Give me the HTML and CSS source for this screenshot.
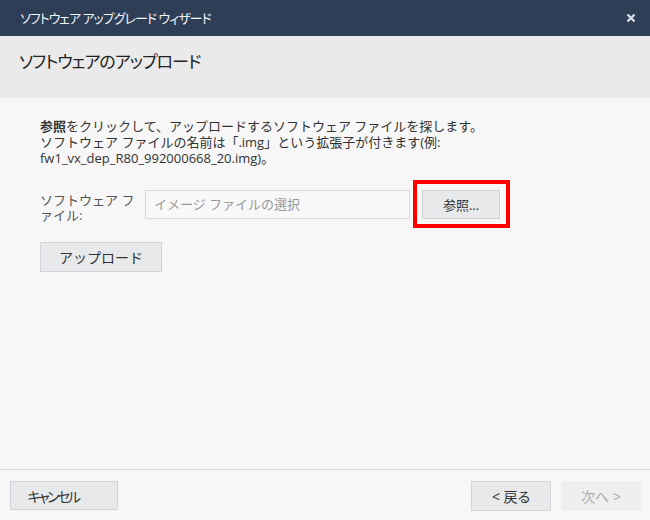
FILE: index.html
```html
<!DOCTYPE html>
<html lang="ja">
<head>
<meta charset="utf-8">
<link rel="stylesheet" href="styles.css">
</head>
<body>
<div class="dialog">
  <div class="titlebar">
    <span class="title">ソフトウェア アップグレード ウィザード</span>
    <span class="close" aria-label="close">
      <svg width="10" height="10" viewBox="0 0 10 10"><path d="M1.5 1.5 L8.5 8.5 M8.5 1.5 L1.5 8.5" stroke="#d7dde6" stroke-width="2.4" stroke-linecap="butt"/></svg>
    </span>
  </div>
  <div class="header">
    <h1 class="heading">ソフトウェアのアップロード</h1>
  </div>
  <div class="body">
    <p class="desc"><b>参照</b>をクリックして、アップロードするソフトウェア ファイルを探します。<br>ソフトウェア ファイルの名前は「<span class="lat">.img</span>」という拡張子が付きます<span class="lat">(</span>例<span class="lat">:</span><br><span class="lat">fw1_vx_dep_R80_992000668_20.img)</span>。</p>
    <div class="filerow">
      <label class="label">ソフトウェア ファイル:</label>
      <input class="file" type="text" placeholder="イメージ ファイルの選択">
      <div class="highlight"><button class="btn browse">参照...</button></div>
    </div>
    <button class="btn upload">アップロード</button>
  </div>
  <div class="footer">
    <button class="btn cancel">キャンセル</button>
    <div class="nav">
      <button class="btn back">&lt; 戻る</button>
      <button class="btn next" disabled>次へ &gt;</button>
    </div>
  </div>
</div>
</body>
</html>
```

FILE: styles.css
```css
html, body {
  margin: 0;
  padding: 0;
}
body {
  width: 650px;
  height: 520px;
  font-family: "Open Sans", "Noto Sans CJK JP", sans-serif;
  background: #f7f7f7;
  overflow: hidden;
}
.dialog {
  display: flex;
  flex-direction: column;
  height: 520px;
}
.titlebar {
  height: 36px;
  background: #2e3e57;
  display: flex;
  align-items: center;
  justify-content: space-between;
  padding: 0 14px 0 20px;
  flex: none;
}
.title {
  color: #f2f4f7;
  font-size: 13px;
  font-feature-settings: "palt";
  letter-spacing: -1px;
  margin-top: -1px;
}
.close {
  display: flex;
  width: 10px;
  height: 10px;
  margin-top: -1px;
}
.header {
  height: 62px;
  background: #eaeaea;
  flex: none;
  padding: 0 19px;
  box-sizing: border-box;
}
.heading {
  margin: 0;
  padding-top: 13px;
  font-size: 17px;
  font-weight: normal;
  color: #222;
  font-feature-settings: "palt";
  letter-spacing: -1px;
  line-height: 26px;
}
.body {
  flex: 1;
  padding: 20px 40px 0 40px;
}
.desc {
  margin: 0;
  font-size: 13px;
  line-height: 16px;
  color: #333;
}
.desc b {
  font-weight: bold;
}
.lat {
  font-stretch: 88%;
}
.filerow {
  display: flex;
  align-items: center;
  margin-top: 14px;
}
.label {
  width: 105px;
  flex: none;
  font-size: 13px;
  line-height: 15px;
  color: #555;
  padding-right: 6px;
  padding-top: 7px;
  box-sizing: border-box;
}
.file {
  width: 265px;
  height: 29px;
  box-sizing: border-box;
  border: 1px solid #d9d9d9;
  background: #f8f8f8;
  font-family: inherit;
  font-size: 13px;
  padding: 0 8px;
  margin: 0;
  outline: none;
}
.file::placeholder {
  color: #999;
}
.highlight {
  margin-left: 3px;
  border: 4px solid #ff0000;
  padding: 6px 6px 5px 5px;
}
.btn {
  font-family: inherit;
  font-size: 13px;
  color: #333;
  background: #e8e9eb;
  border: 1px solid #d0d3d8;
  margin: 0;
  padding: 0;
  box-sizing: border-box;
  cursor: pointer;
}
.browse {
  width: 78px;
  height: 29px;
  display: block;
}
.upload {
  margin-top: 14px;
  width: 122px;
  height: 30px;
  font-size: 14px;
}
.footer {
  flex: none;
  height: 51px;
  border-top: 1px solid #dcdcdc;
  display: flex;
  justify-content: space-between;
  align-items: flex-start;
  padding: 11px 9px 0 10px;
  box-sizing: border-box;
}
.nav {
  display: flex;
  gap: 10px;
}
.cancel {
  width: 108px;
  height: 29px;
  font-size: 14px;
  font-feature-settings: "palt";
  letter-spacing: -2.5px;
  padding-right: 24px;
  text-indent: 2px;
}
.back {
  width: 80px;
  height: 30px;
  font-size: 14px;
  font-feature-settings: "palt";
}
.next {
  width: 80px;
  height: 30px;
  font-size: 14px;
  font-feature-settings: "palt";
  background: #efefef;
  border-color: #efefef;
  color: #aaa;
  cursor: default;
}
```
